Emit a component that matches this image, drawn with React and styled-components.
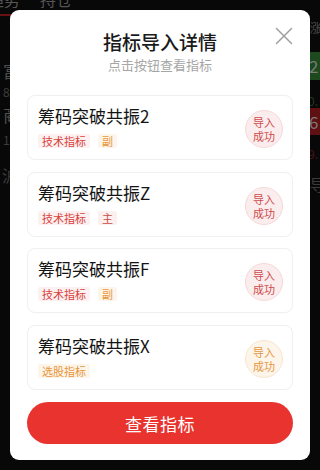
import React from 'react';
import styled, { createGlobalStyle } from 'styled-components';

const GlobalStyle = createGlobalStyle`
  html, body {
    margin: 0;
    padding: 0;
    background: #080808;
  }
  body {
    font-family: "Noto Sans CJK SC", "Noto Sans", sans-serif;
    overflow: hidden;
  }
`;

// ---- the dimmed app behind the dialog ----

const Page = styled.div`
  width: 320px;
  height: 470px;
  background: #080808;
  overflow: hidden;
  color: #4a4a4a;
`;

const Tabs = styled.div`
  display: flex;
  gap: 20px;
  margin-top: -12px;
  height: 28px;
`;

const Tab = styled.div`
  font-size: 16px;
  line-height: 22px;
  color: #555;
  border-bottom: 2px solid ${({ active }) => (active ? '#6a0f14' : 'transparent')};
  width: ${({ active }) => (active ? '20px' : 'auto')};
  overflow: ${({ active }) => (active ? 'hidden' : 'visible')};
  white-space: nowrap;
  height: 26px;
  text-indent: ${({ active }) => (active ? '-12px' : '0')};
`;

const HeadRow = styled.div`
  display: flex;
  justify-content: flex-end;
  height: 26px;
  font-size: 12px;
  line-height: 24px;
  color: #4a4a4a;
  margin-right: -14px;
`;

const StockRow = styled.div`
  display: flex;
  justify-content: space-between;
  height: ${({ h }) => h}px;
`;

const NameCell = styled.div`
  display: flex;
  flex-direction: column;
  padding-left: 3px;
  padding-top: ${({ pt }) => pt}px;
`;

const StockName = styled.div`
  font-size: 17px;
  line-height: 20px;
  color: #4e4e4e;
`;

const StockCode = styled.div`
  font-size: 12px;
  line-height: 14px;
  margin-top: ${({ mt }) => mt}px;
  color: #3e3e3e;
`;

const ValueCell = styled.div`
  display: flex;
  flex-direction: column;
  width: 12px;
  padding-top: ${({ pt }) => pt}px;
`;

const ChangeBox = styled.div`
  height: ${({ h }) => h}px;
  background: ${({ up }) => (up ? '#5e1012' : '#1c4a1e')};
  color: #7a7a7a;
  font-size: 17px;
  line-height: ${({ h }) => h}px;
  padding-left: 1px;
`;

const SubValue = styled.div`
  font-size: 12px;
  line-height: 14px;
  margin-top: ${({ mt }) => mt}px;
  color: ${({ up }) => (up ? '#4a1416' : '#1f3a22')};
`;

const SectionRow = styled.div`
  display: flex;
  justify-content: space-between;
  font-size: 16px;
  line-height: 20px;
  color: #3a3a3a;
  padding: 0 0 0 12px;
  margin-left: -10px;
`;

const SectionRight = styled.span`
  padding-top: 9px;
  width: 10px;
  overflow: hidden;
  white-space: nowrap;
`;

// ---- dialog ----

const Overlay = styled.div`
  position: fixed;
  inset: 0;
  display: flex;
  justify-content: center;
  align-items: flex-start;
  padding-top: 10px;
`;

const Dialog = styled.div`
  position: relative;
  width: 300px;
  height: 450px;
  box-sizing: border-box;
  background: #fff;
  border-radius: 9px;
  padding: 21px 17px 16px;
  display: flex;
  flex-direction: column;
`;

const Title = styled.div`
  text-align: center;
  font-size: 19px;
  line-height: 22px;
  font-weight: 500;
  color: #1a1a1a;
`;

const Subtitle = styled.div`
  text-align: center;
  font-size: 13px;
  line-height: 18px;
  margin-top: 3px;
  color: #a6a6a6;
`;

const CloseButton = styled.button`
  position: absolute;
  top: 17px;
  right: 17px;
  width: 18px;
  height: 18px;
  padding: 0;
  border: none;
  background: none;
  cursor: pointer;
`;

const List = styled.div`
  display: flex;
  flex-direction: column;
  gap: 11.7px;
  margin-top: 21px;
`;

const Card = styled.div`
  height: 65px;
  box-sizing: border-box;
  border: 1px solid #f0f0f0;
  border-radius: 8px;
  padding: 9px 9px 0 10px;
  display: flex;
  align-items: center;
  justify-content: space-between;
`;

const CardInfo = styled.div`
  display: flex;
  flex-direction: column;
  align-self: flex-start;
`;

const CardTitle = styled.div`
  font-size: 17px;
  line-height: 22px;
  color: #141414;
`;

const Tags = styled.div`
  display: flex;
  gap: 8px;
  margin-top: 7px;
`;

const tagColors = {
  red: { fg: '#d8423c', bg: '#fdf0f0' },
  brown: { fg: '#c94c44', bg: '#fcf0ee' },
  orange: { fg: '#e9953a', bg: '#fdf5ea' },
};

const Tag = styled.span`
  font-size: 11px;
  line-height: 14px;
  padding: 0 4px;
  border-radius: 2px;
  color: ${({ tone }) => tagColors[tone].fg};
  background: ${({ tone }) => tagColors[tone].bg};
`;

const badgeColors = {
  red: { fg: '#cf4a4c', bg: '#fbeded', border: '#f5d9d9' },
  orange: { fg: '#e6963f', bg: '#fdf4ea', border: '#f8e6d0' },
};

const Badge = styled.div`
  width: 38px;
  height: 38px;
  box-sizing: border-box;
  border-radius: 50%;
  border: 1px solid ${({ tone }) => badgeColors[tone].border};
  background: ${({ tone }) => badgeColors[tone].bg};
  color: ${({ tone }) => badgeColors[tone].fg};
  display: flex;
  align-items: center;
  justify-content: center;
  margin-top: -6px;
`;

const BadgeText = styled.span`
  width: 23px;
  font-size: 11px;
  line-height: 14px;
  text-align: center;
  word-break: break-all;
`;

const PrimaryButton = styled.button`
  margin-top: 12px;
  height: 42px;
  width: 100%;
  border: none;
  border-radius: 21px;
  background: #e8332f;
  color: #fff;
  font-family: inherit;
  font-size: 17px;
  letter-spacing: 0.5px;
  cursor: pointer;
`;

const items = [
  { name: '筹码突破共振2', tags: [['技术指标', 'red'], ['副', 'orange']], tone: 'red' },
  { name: '筹码突破共振Z', tags: [['技术指标', 'red'], ['主', 'brown']], tone: 'red' },
  { name: '筹码突破共振F', tags: [['技术指标', 'red'], ['副', 'orange']], tone: 'red' },
  { name: '筹码突破共振X', tags: [['选股指标', 'orange']], tone: 'orange' },
];

const CloseIcon = () => (
  <svg width="18" height="18" viewBox="0 0 18 18">
    <path d="M1.5 1.5 L16.5 16.5 M16.5 1.5 L1.5 16.5" stroke="#a0a0a0" strokeWidth="1.5" strokeLinecap="round" />
  </svg>
);

const Background = () => (
  <Page>
    <Tabs>
      <Tab active>趋势</Tab>
      <Tab>持仓</Tab>
    </Tabs>
    <HeadRow>涨幅</HeadRow>
    <StockRow h={60}>
      <NameCell pt={19}>
        <StockName>富</StockName>
        <StockCode mt={4}>830</StockCode>
      </NameCell>
      <ValueCell pt={10}>
        <ChangeBox h={28}>2</ChangeBox>
        <SubValue mt={14}>0.</SubValue>
      </ValueCell>
    </StockRow>
    <StockRow h={63}>
      <NameCell pt={3}>
        <StockName>商</StockName>
        <StockCode mt={8}>19</StockCode>
      </NameCell>
      <ValueCell pt={6}>
        <ChangeBox h={27} up>6</ChangeBox>
        <SubValue mt={12} up>9.</SubValue>
      </ValueCell>
    </StockRow>
    <SectionRow>
      <span>沪</span>
      <SectionRight>导</SectionRight>
    </SectionRow>
  </Page>
);

const App = () => (
  <>
    <GlobalStyle />
    <Background />
    <Overlay>
      <Dialog>
        <Title>指标导入详情</Title>
        <Subtitle>点击按钮查看指标</Subtitle>
        <CloseButton aria-label="关闭">
          <CloseIcon />
        </CloseButton>
        <List>
          {items.map((item) => (
            <Card key={item.name}>
              <CardInfo>
                <CardTitle>{item.name}</CardTitle>
                <Tags>
                  {item.tags.map(([label, tone]) => (
                    <Tag key={label} tone={tone}>{label}</Tag>
                  ))}
                </Tags>
              </CardInfo>
              <Badge tone={item.tone}>
                <BadgeText>导入成功</BadgeText>
              </Badge>
            </Card>
          ))}
        </List>
        <PrimaryButton>查看指标</PrimaryButton>
      </Dialog>
    </Overlay>
  </>
);

export default App;
